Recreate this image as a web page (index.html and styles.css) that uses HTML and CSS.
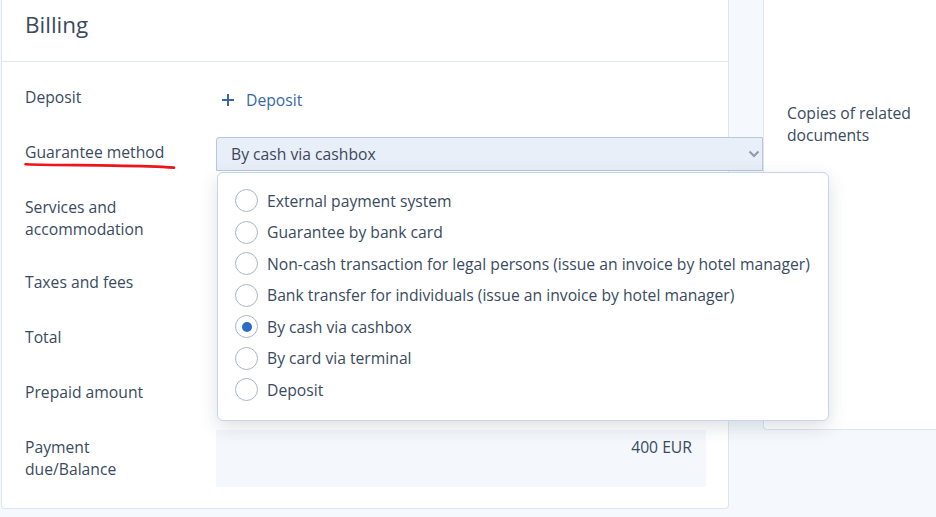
FILE: index.html
```html
<!DOCTYPE html>
<html>
<head>
<meta charset="utf-8">
<link rel="stylesheet" href="styles.css">
</head>
<body>
<div class="page">
  <section class="card billing">
    <header class="card-head"><h1 class="title">Billing</h1></header>
    <div class="rows">
      <div class="row">
        <div class="label">Deposit</div>
        <div class="value">
          <a class="add-link">
            <svg class="plus" width="14" height="14" viewBox="0 0 14 14"><path d="M7 1v12M1 7h12" stroke="#3768a8" stroke-width="2" fill="none"/></svg>
            <span>Deposit</span>
          </a>
        </div>
      </div>
      <div class="row">
        <div class="label marked">Guarantee method
          <svg class="scribble" width="152" height="8" viewBox="0 0 152 8"><path d="M1.5 2.2 C30 3.2 60 3.0 90 3.6 C115 4.0 135 4.6 150 5.6" stroke="#ee1419" stroke-width="2.6" fill="none" stroke-linecap="round"/></svg>
        </div>
        <div class="value">
          <div class="select">
            <span class="select-text">By cash via cashbox</span>
            <svg class="chev" width="12" height="8" viewBox="0 0 12 8"><path d="M1.5 1.5l4.5 4.5 4.5-4.5" stroke="#8e9aab" stroke-width="2" fill="none"/></svg>
            <div class="dropdown">
              <div class="opt"><span class="radio"></span>External payment system</div>
              <div class="opt"><span class="radio"></span>Guarantee by bank card</div>
              <div class="opt"><span class="radio"></span>Non-cash transaction for legal persons (issue an invoice by hotel manager)</div>
              <div class="opt"><span class="radio"></span>Bank transfer for individuals (issue an invoice by hotel manager)</div>
              <div class="opt"><span class="radio on"></span>By cash via cashbox</div>
              <div class="opt"><span class="radio"></span>By card via terminal</div>
              <div class="opt"><span class="radio"></span>Deposit</div>
            </div>
          </div>
        </div>
      </div>
      <div class="row">
        <div class="label">Services and<br>accommodation</div>
        <div class="value"></div>
      </div>
      <div class="row">
        <div class="label">Taxes and fees</div>
        <div class="value"></div>
      </div>
      <div class="row">
        <div class="label">Total</div>
        <div class="value"></div>
      </div>
      <div class="row">
        <div class="label">Prepaid amount</div>
        <div class="value"></div>
      </div>
      <div class="row last">
        <div class="label">Payment<br>due/Balance</div>
        <div class="value"><div class="balance">400 EUR</div></div>
      </div>
    </div>
  </section>
  <aside class="card side">
    <p class="side-text">Copies of related documents</p>
  </aside>
</div>
</body>
</html>
```

FILE: styles.css
```css
html, body {
  margin: 0;
  padding: 0;
}
body {
  background: #f5f8fc;
  font-family: "Open Sans", "Noto Sans", sans-serif;
  color: #3a4a60;
  font-size: 15.7px;
  line-height: 22px;
  width: 936px;
  height: 517px;
  overflow: hidden;
}
.page {
  display: flex;
  align-items: flex-start;
  padding-left: 1px;
  gap: 34px;
}
.card {
  background: #fff;
  border: 1px solid #dfe5ee;
  border-top: none;
}
.billing {
  width: 726px;
  flex: none;
  border-radius: 0 0 4px 4px;
  position: relative;
}
.card-head {
  height: 61px;
  border-bottom: 1px solid #e3e8ef;
  display: flex;
  align-items: center;
  padding-left: 23px;
}
.title {
  margin: 0;
  font-size: 22.5px;
  font-weight: 400;
  line-height: 30px;
  color: #3b4a5f;
  padding-bottom: 12px;
}
.rows {
  padding: 20px 22px 21px 23px;
  display: flex;
  flex-direction: column;
  gap: 21px;
}
.row {
  display: flex;
  min-height: 34px;
}
.label {
  width: 191px;
  flex: none;
  padding: 4px 0 6px;
  position: relative;
}
.value {
  flex: 1;
  position: relative;
}
.add-link {
  display: flex;
  align-items: center;
  gap: 11px;
  color: #3768a8;
  padding: 7px 0 0 5px;
}
.scribble {
  position: absolute;
  left: -1px;
  top: 25px;
}
.select {
  position: relative;
  width: 547px;
  height: 34px;
  box-sizing: border-box;
  border: 1px solid #b9c7da;
  border-radius: 3px 0 0 0;
  background: #e9eff8;
  color: #3d4658;
  display: flex;
  align-items: center;
  padding-left: 14px;
}
.select-text {
  flex: 1;
}
.chev {
  margin-right: 2px;
}
.dropdown {
  position: absolute;
  left: 0;
  top: 34px;
  width: 612px;
  box-sizing: border-box;
  background: #fff;
  border: 1px solid #c6d5ea;
  border-radius: 6px;
  box-shadow: 0 6px 18px rgba(40, 60, 90, 0.16);
  padding: 12px 0 14px 17px;
  color: #3a4a60;
  z-index: 5;
}
.opt {
  display: flex;
  align-items: center;
  height: 31.5px;
  gap: 9px;
  white-space: nowrap;
}
.radio {
  width: 21px;
  height: 21px;
  border: 1px solid #a9b5c5;
  border-radius: 50%;
  flex: none;
  position: relative;
  background: #fff;
}
.radio.on::after {
  content: "";
  position: absolute;
  left: 5.5px;
  top: 5.5px;
  width: 10px;
  height: 10px;
  border-radius: 50%;
  background: #2b6cc6;
}
.last .value {
  margin-top: -2px;
}
.balance {
  height: 57px;
  background: #f4f7fb;
  text-align: right;
  padding: 6px 14px 0 0;
  box-sizing: border-box;
}
.side {
  flex: 1;
  height: 430px;
  box-sizing: border-box;
  border-right: none;
  border-radius: 0 0 0 4px;
  padding: 102px 0 0 23px;
}
.side-text {
  margin: 0;
  width: 140px;
}
```
